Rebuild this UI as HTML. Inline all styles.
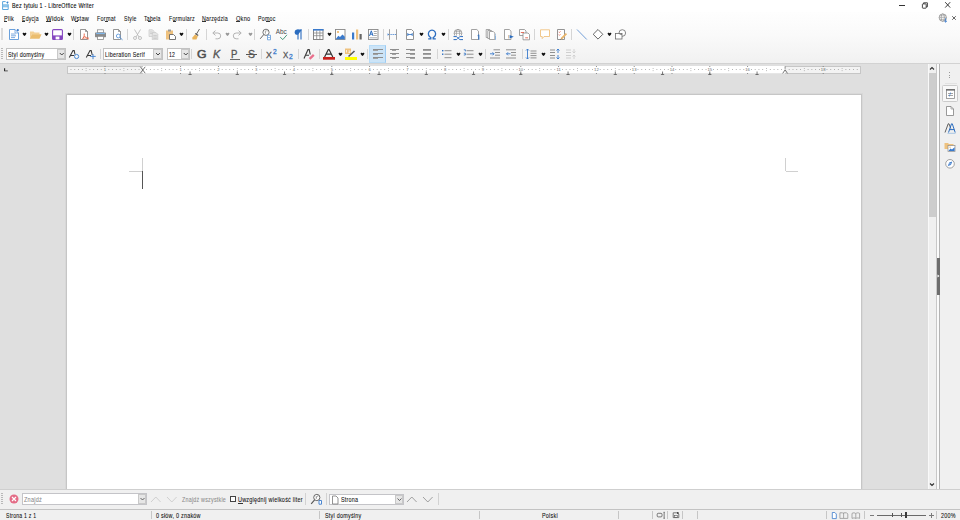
<!DOCTYPE html>
<html><head><meta charset="utf-8">
<style>
*{margin:0;padding:0;box-sizing:border-box}
html,body{width:960px;height:520px;overflow:hidden;background:#fff;font-family:"Liberation Sans",sans-serif;color:#000}
.a{position:absolute;display:block}
.t{position:absolute;white-space:nowrap;line-height:1;transform-origin:0 0;-webkit-text-stroke:0.08px currentColor;letter-spacing:0.3px}
</style></head><body>
<div class="a" style="left:0px;top:0px;width:960px;height:12px;background:#fff"></div>
<div class="a" style="left:0px;top:12px;width:960px;height:51px;background:linear-gradient(#fefefe,#fafafa 45%,#f1f1f1)"></div>
<div class="a" style="left:0px;top:63px;width:960px;height:1px;background:#d2d2d2"></div>
<div class="a" style="left:0px;top:64px;width:928px;height:425px;background:#dfdfdf"></div>
<div class="a" style="left:65px;top:93px;width:798px;height:396px;background:#d8d8d8"></div>
<div class="a" style="left:66px;top:94px;width:796px;height:395px;background:#c6c6c6"></div>
<div class="a" style="left:67px;top:95px;width:794px;height:394px;background:#fff"></div>
<div class="a" style="left:928px;top:64px;width:8px;height:425px;background:#f0f0f0;border-left:1px solid #f9f9f9"></div>
<div class="a" style="left:929px;top:73px;width:7px;height:144px;background:#cdcdcd"></div>
<svg class="a" style="left:928px;top:64px;" width="8" height="9" viewBox="0 0 8 9"><path d="M2 5.5 L4 3.5 L6 5.5" stroke="#333" stroke-width="1.1" fill="none"/></svg>
<svg class="a" style="left:928px;top:480px;" width="8" height="9" viewBox="0 0 8 9"><path d="M2 3.5 L4 5.5 L6 3.5" stroke="#333" stroke-width="1.1" fill="none"/></svg>
<div class="a" style="left:936px;top:64px;width:1px;height:425px;background:#c8c8c8"></div>
<div class="a" style="left:937px;top:64px;width:2px;height:425px;background:#fbfbfb"></div>
<div class="a" style="left:939px;top:64px;width:1px;height:425px;background:#b4b4b4"></div>
<div class="a" style="left:937px;top:258px;width:3px;height:37px;background:#6d6d6d"></div>
<svg class="a" style="left:937px;top:273px;" width="3" height="6" viewBox="0 0 3 6"><path d="M0.5 1.5 L2.5 3 L0.5 4.5 Z" fill="#fff"/></svg>
<div class="a" style="left:940px;top:64px;width:20px;height:425px;background:#f0f0f0"></div>
<div class="a" style="left:0px;top:489px;width:960px;height:1px;background:#cfcfcf"></div>
<div class="a" style="left:0px;top:490px;width:960px;height:19px;background:#f0f0f0"></div>
<div class="a" style="left:0px;top:509px;width:960px;height:1px;background:#c3c3c3"></div>
<div class="a" style="left:0px;top:510px;width:960px;height:10px;background:#f0f0f0"></div>
<svg class="a" style="left:1px;top:0px;" width="9" height="11" viewBox="0 0 9 11"><path d="M1.6 1.6H4.6M1.6 1.6V9.5H7.2V4.3" fill="none" stroke="#5aa6dd" stroke-width="1"/><rect x="1.6" y="4.3" width="5.6" height="3" fill="#7dbbe6"/><rect x="2.4" y="4.8" width="3.8" height="2" fill="#93c6ea"/><circle cx="6.7" cy="2.2" r="0.8" fill="#1f6fc8"/><circle cx="5.5" cy="2.3" r="0.5" fill="#5aa6dd"/><circle cx="6.4" cy="3.4" r="0.5" fill="#5aa6dd"/></svg>
<div class="t" style="left:12px;top:2px;font-size:7px;color:#000;transform:scaleX(0.767);">Bez tytułu 1 - LibreOffice Writer</div>
<div class="a" style="left:899px;top:5px;width:6px;height:1px;background:#333"></div>
<svg class="a" style="left:921px;top:1px;" width="8" height="8" viewBox="0 0 8 8"><rect x="1.4" y="2.9" width="3.8" height="4.3" rx="0.5" fill="none" stroke="#333" stroke-width="0.9"/><path d="M2.6 2.9V1.8H6.4V5.8H5.2" fill="none" stroke="#333" stroke-width="0.9"/></svg>
<svg class="a" style="left:944px;top:1px;" width="8" height="8" viewBox="0 0 8 8"><path d="M1.2 1.2L6.2 6.6M6.2 1.2L1.2 6.6" stroke="#333" stroke-width="0.95"/></svg>
<div class="t" style="left:4px;top:14.6px;font-size:7px;color:#111;transform:scaleX(0.796);">Plik</div>
<div class="t" style="left:21.6px;top:14.6px;font-size:7px;color:#111;transform:scaleX(0.737);">Edycja</div>
<div class="t" style="left:46.4px;top:14.6px;font-size:7px;color:#111;transform:scaleX(0.857);">Widok</div>
<div class="t" style="left:71.4px;top:14.6px;font-size:7px;color:#111;transform:scaleX(0.802);">Wstaw</div>
<div class="t" style="left:97px;top:14.6px;font-size:7px;color:#111;transform:scaleX(0.781);">Format</div>
<div class="t" style="left:123.6px;top:14.6px;font-size:7px;color:#111;transform:scaleX(0.74);">Style</div>
<div class="t" style="left:143.9px;top:14.6px;font-size:7px;color:#111;transform:scaleX(0.745);">Tabela</div>
<div class="t" style="left:168.7px;top:14.6px;font-size:7px;color:#111;transform:scaleX(0.755);">Formularz</div>
<div class="t" style="left:202.3px;top:14.6px;font-size:7px;color:#111;transform:scaleX(0.758);">Narzędzia</div>
<div class="t" style="left:235.9px;top:14.6px;font-size:7px;color:#111;transform:scaleX(0.805);">Okno</div>
<div class="t" style="left:258.4px;top:14.6px;font-size:7px;color:#111;transform:scaleX(0.757);">Pomoc</div>
<div class="a" style="left:4px;top:21.2px;width:3px;height:0.9px;background:#333"></div>
<div class="a" style="left:21.6px;top:21.2px;width:3px;height:0.9px;background:#333"></div>
<div class="a" style="left:46.4px;top:21.2px;width:5px;height:0.9px;background:#333"></div>
<div class="a" style="left:75px;top:21.2px;width:3px;height:0.9px;background:#333"></div>
<div class="a" style="left:105px;top:21.2px;width:2.5px;height:0.9px;background:#333"></div>
<div class="a" style="left:148px;top:21.2px;width:3px;height:0.9px;background:#333"></div>
<div class="a" style="left:173px;top:21.2px;width:2.5px;height:0.9px;background:#333"></div>
<div class="a" style="left:202.3px;top:21.2px;width:4px;height:0.9px;background:#333"></div>
<div class="a" style="left:235.9px;top:21.2px;width:4px;height:0.9px;background:#333"></div>
<div class="a" style="left:266px;top:21.2px;width:4px;height:0.9px;background:#333"></div>
<svg class="a" style="left:938px;top:13px;" width="11" height="10" viewBox="0 0 11 10"><circle cx="4.8" cy="4.6" r="3.7" fill="#fff" stroke="#8a8a8a" stroke-width="0.75"/><ellipse cx="4.8" cy="4.6" rx="1.6" ry="3.7" fill="none" stroke="#8a8a8a" stroke-width="0.6"/><path d="M1.1 4.6h7.4M1.6 2.8h6.4M1.6 6.4h6.4" stroke="#8a8a8a" stroke-width="0.55"/><path d="M7.6 5.2v3.8M6.2 7.8l1.4 1.4 1.4-1.4" stroke="#3a7acc" stroke-width="0.85" fill="none"/></svg>
<svg class="a" style="left:951px;top:15px;" width="6" height="6" viewBox="0 0 6 6"><path d="M1.2 1.2l3.6 3.6M4.8 1.2l-3.6 3.6" stroke="#555" stroke-width="0.9"/></svg>
<div class="a" style="left:1px;top:28px;width:2px;height:12px;background:#dcdcdc"></div>
<svg class="a" style="left:8px;top:28px;" width="12" height="13" viewBox="0 0 12 13"><path d="M1.5 1.5H7L10.5 5V11.5H1.5Z" fill="#fff" stroke="#5a96d8" stroke-width="0.9"/><path d="M7 1.5V5H10.5" fill="none" stroke="#5a96d8" stroke-width="0.7"/><path d="M3 6h4.5M3 7.8h5M3 9.6h4" stroke="#5a96d8" stroke-width="0.8"/><circle cx="9.8" cy="2.2" r="1.1" fill="#3a7acc"/></svg>
<svg class="a" style="left:22px;top:32px;" width="5" height="5" viewBox="0 0 5 5"><path d="M0.6 1.5C0.6 0.6 1.6 0.5 2.5 1.2C3.4 0.5 4.4 0.6 4.4 1.5C4.4 2.3 3.4 3.2 2.5 4.1C1.6 3.2 0.6 2.3 0.6 1.5Z" fill="#111"/></svg>
<svg class="a" style="left:29px;top:29px;" width="13" height="11" viewBox="0 0 13 11"><path d="M1 2.5H4.5L5.5 3.5H10.5V5.5H2.5L1 9.5Z" fill="#f3d095"/><path d="M0.8 9.8L2.8 5.3H12.5L10.5 9.8Z" fill="#ebbd6e"/></svg>
<svg class="a" style="left:44px;top:32px;" width="5" height="5" viewBox="0 0 5 5"><path d="M0.6 1.5C0.6 0.6 1.6 0.5 2.5 1.2C3.4 0.5 4.4 0.6 4.4 1.5C4.4 2.3 3.4 3.2 2.5 4.1C1.6 3.2 0.6 2.3 0.6 1.5Z" fill="#111"/></svg>
<svg class="a" style="left:51px;top:28px;" width="13" height="13" viewBox="0 0 13 13"><rect x="1.6" y="1.6" width="9.8" height="9.8" rx="1" fill="#fff" stroke="#8547c0" stroke-width="1.1"/><rect x="1.6" y="7.4" width="9.8" height="4" fill="#8547c0"/><rect x="4.6" y="8.6" width="3.8" height="2.8" fill="#fff"/></svg>
<svg class="a" style="left:66.5px;top:32px;" width="5" height="5" viewBox="0 0 5 5"><path d="M0.6 1.5C0.6 0.6 1.6 0.5 2.5 1.2C3.4 0.5 4.4 0.6 4.4 1.5C4.4 2.3 3.4 3.2 2.5 4.1C1.6 3.2 0.6 2.3 0.6 1.5Z" fill="#111"/></svg>
<div class="a" style="left:73px;top:29px;width:1px;height:11px;background:#d5d5d5"></div>
<svg class="a" style="left:79px;top:28px;" width="11" height="13" viewBox="0 0 11 13"><path d="M1.5 1.5H6.5L8.5 3.5V11.5H1.5Z" fill="#fff" stroke="#7a7a7a" stroke-width="0.8"/><path d="M6.5 1.5V3.5H8.5" fill="none" stroke="#7a7a7a" stroke-width="0.7"/><path d="M5.2 5.5C5.6 8 4.5 10 3.2 11.3M5.4 8C6.5 9.6 8 10.6 9.8 11" stroke="#e8603f" stroke-width="0.9" fill="none"/><path d="M3.5 10.2L9.8 9.8" stroke="#e8603f" stroke-width="0.6"/></svg>
<svg class="a" style="left:94px;top:28px;" width="13" height="13" viewBox="0 0 13 13"><rect x="3.5" y="1.8" width="6" height="3" fill="#fff" stroke="#8a8a8a" stroke-width="0.8"/><rect x="1" y="4.6" width="11" height="4.6" rx="0.6" fill="#8a8a8a"/><rect x="2.2" y="4.8" width="8.6" height="1.3" fill="#7fb6ea"/><rect x="3.5" y="8.3" width="6" height="3.2" fill="#fff" stroke="#8a8a8a" stroke-width="0.8"/></svg>
<svg class="a" style="left:112px;top:28px;" width="12" height="13" viewBox="0 0 12 13"><path d="M1.5 1.5H6.5L8.5 3.5V11.5H1.5Z" fill="#fff" stroke="#7a7a7a" stroke-width="0.8"/><path d="M6.5 1.5V3.5H8.5" fill="none" stroke="#7a7a7a" stroke-width="0.7"/><circle cx="6.3" cy="8" r="1.9" fill="#fff" stroke="#4a8ad4" stroke-width="0.8"/><path d="M7.7 9.4L10.5 11.8" stroke="#4a8ad4" stroke-width="0.9"/></svg>
<div class="a" style="left:127px;top:29px;width:1px;height:11px;background:#d5d5d5"></div>
<svg class="a" style="left:132px;top:29px;" width="11" height="11" viewBox="0 0 11 11"><path d="M2.5 0.5L7 8M8.5 0.5L4 8" stroke="#b4b4b4" stroke-width="0.8" fill="none"/><circle cx="3" cy="9" r="1.5" fill="none" stroke="#b4b4b4" stroke-width="0.8"/><circle cx="8" cy="9" r="1.5" fill="none" stroke="#b4b4b4" stroke-width="0.8"/></svg>
<svg class="a" style="left:148px;top:29px;" width="11" height="11" viewBox="0 0 11 11"><path d="M1 0.8H4.5L6 2.3V7.5H1Z" fill="#e8e8e8" stroke="#c8c8c8" stroke-width="0.7"/><path d="M4.3 3.5H8L9.8 5.3V10.8H4.3Z" fill="#e4e4e4" stroke="#c8c8c8" stroke-width="0.7"/><path d="M2 3h2.5M2 4.5h2.5M5.3 6.5h3.5M5.3 8h3.5M5.3 9.5h3.5" stroke="#c0c0c0" stroke-width="0.6"/></svg>
<svg class="a" style="left:165px;top:28px;" width="12" height="13" viewBox="0 0 12 13"><rect x="1" y="2.5" width="7" height="9" fill="#eec17e"/><rect x="3" y="1.5" width="3" height="2" fill="#999"/><path d="M4.5 6.5H8.5L10.5 8.5V11.5H4.5Z" fill="#fff" stroke="#666" stroke-width="0.9"/></svg>
<svg class="a" style="left:178.5px;top:32px;" width="5" height="5" viewBox="0 0 5 5"><path d="M0.6 1.5C0.6 0.6 1.6 0.5 2.5 1.2C3.4 0.5 4.4 0.6 4.4 1.5C4.4 2.3 3.4 3.2 2.5 4.1C1.6 3.2 0.6 2.3 0.6 1.5Z" fill="#111"/></svg>
<div class="a" style="left:186px;top:29px;width:1px;height:11px;background:#d5d5d5"></div>
<svg class="a" style="left:191px;top:28px;" width="10" height="13" viewBox="0 0 10 13"><path d="M8.5 1L5.5 6" stroke="#555" stroke-width="0.9"/><path d="M4.2 5.5L7.2 7.6" stroke="#555" stroke-width="1.2"/><path d="M4 6.5L6.8 8.3L5.5 11.5H1.5L1.2 9.8Z" fill="#e8b35c"/></svg>
<div class="a" style="left:206px;top:29px;width:1px;height:11px;background:#d5d5d5"></div>
<svg class="a" style="left:211px;top:29px;" width="11" height="11" viewBox="0 0 11 11"><path d="M2.5 4H6.8A2.9 2.9 0 0 1 6.8 9.8H4.5" stroke="#a8a8a8" stroke-width="0.85" fill="none"/><path d="M4.5 1.6L1.8 4L4.5 6.4" stroke="#a8a8a8" stroke-width="0.85" fill="none"/></svg>
<svg class="a" style="left:225px;top:32px;" width="5" height="5" viewBox="0 0 5 5"><path d="M0.6 1.5C0.6 0.6 1.6 0.5 2.5 1.2C3.4 0.5 4.4 0.6 4.4 1.5C4.4 2.3 3.4 3.2 2.5 4.1C1.6 3.2 0.6 2.3 0.6 1.5Z" fill="#9a9a9a"/></svg>
<svg class="a" style="left:232px;top:29px;" width="11" height="11" viewBox="0 0 11 11"><path d="M8.5 4H4.2A2.9 2.9 0 0 0 4.2 9.8H6.5" stroke="#a8a8a8" stroke-width="0.85" fill="none"/><path d="M6.5 1.6L9.2 4L6.5 6.4" stroke="#a8a8a8" stroke-width="0.85" fill="none"/></svg>
<svg class="a" style="left:247.5px;top:32px;" width="5" height="5" viewBox="0 0 5 5"><path d="M0.6 1.5C0.6 0.6 1.6 0.5 2.5 1.2C3.4 0.5 4.4 0.6 4.4 1.5C4.4 2.3 3.4 3.2 2.5 4.1C1.6 3.2 0.6 2.3 0.6 1.5Z" fill="#9a9a9a"/></svg>
<div class="a" style="left:254px;top:29px;width:1px;height:11px;background:#d5d5d5"></div>
<svg class="a" style="left:259px;top:28px;" width="13" height="13" viewBox="0 0 13 13"><circle cx="7" cy="4.3" r="3.1" fill="#fff" stroke="#555" stroke-width="0.8"/><path d="M4.8 6.5L1.2 10.8" stroke="#555" stroke-width="0.9"/><path d="M6.4 2.6v3M7.4 2.8h1.2" stroke="#666" stroke-width="0.6"/><path d="M8.5 7.2H11.5V11.8H8.5Z" fill="#fff" stroke="#5a96d8" stroke-width="0.8"/><path d="M9.2 9.5h1.6" stroke="#5a96d8" stroke-width="0.8"/></svg>
<svg class="a" style="left:275px;top:28px;" width="13" height="13" viewBox="0 0 13 13"><text x="0.8" y="6.3" font-family="Liberation Sans" font-size="6.4" fill="#4a4a4a" textLength="11" lengthAdjust="spacingAndGlyphs">Abc</text><path d="M5.2 9.2L7.8 11.6L12 6.8" stroke="#3a9070" stroke-width="0.9" fill="none"/></svg>
<svg class="a" style="left:293px;top:28px;" width="10" height="13" viewBox="0 0 10 13"><path d="M5 1.6V11.6M8 1.6V11.6" stroke="#2a6cbf" stroke-width="1.1"/><path d="M9 1.6H4.3A2.6 2.6 0 0 0 4.3 6.8H5Z" fill="#2a6cbf"/></svg>
<div class="a" style="left:308px;top:29px;width:1px;height:11px;background:#d5d5d5"></div>
<svg class="a" style="left:312px;top:28px;" width="12" height="13" viewBox="0 0 12 13"><rect x="1.5" y="1.5" width="9.5" height="10" fill="#fff" stroke="#777" stroke-width="0.9"/><rect x="1" y="1" width="10.5" height="1.6" fill="#3a7acc"/><path d="M1.5 5h9.5M1.5 7.7h9.5M4.7 2.5v9M7.9 2.5v9" stroke="#888" stroke-width="0.8"/></svg>
<svg class="a" style="left:327px;top:32px;" width="5" height="5" viewBox="0 0 5 5"><path d="M0.6 1.5C0.6 0.6 1.6 0.5 2.5 1.2C3.4 0.5 4.4 0.6 4.4 1.5C4.4 2.3 3.4 3.2 2.5 4.1C1.6 3.2 0.6 2.3 0.6 1.5Z" fill="#111"/></svg>
<svg class="a" style="left:334px;top:28px;" width="12" height="13" viewBox="0 0 12 13"><rect x="1.5" y="1.5" width="9.5" height="10" fill="#fff" stroke="#888" stroke-width="0.9"/><circle cx="4" cy="4" r="0.9" fill="#eea845"/><path d="M1.8 11L4.3 7.8L6 9L8.5 6.5L10.8 8.8V11.2H1.8Z" fill="#3a7acc"/></svg>
<svg class="a" style="left:351px;top:28px;" width="12" height="13" viewBox="0 0 12 13"><rect x="1" y="4.5" width="2.2" height="7" fill="#3a7acc"/><rect x="5" y="1.5" width="2.2" height="10" fill="#eec17e"/><rect x="8.5" y="6" width="2.2" height="5.5" fill="#666"/></svg>
<svg class="a" style="left:367px;top:28px;" width="12" height="13" viewBox="0 0 12 13"><rect x="1.5" y="1.5" width="9.5" height="10" fill="#fff" stroke="#888" stroke-width="0.9"/><path d="M2.5 8L4.3 2.8L6.1 8M3.2 6.2h2.2" stroke="#2a6cbf" stroke-width="1" fill="none"/><path d="M6.8 3.5h3M6.8 5.5h3M6.8 7.5h3M2.5 9.8h7.5" stroke="#888" stroke-width="0.7"/></svg>
<div class="a" style="left:383px;top:29px;width:1px;height:11px;background:#d5d5d5"></div>
<svg class="a" style="left:387px;top:28px;" width="12" height="13" viewBox="0 0 12 13"><path d="M2.5 1.2V11.8M9.5 1.2V11.8" stroke="#8a8a8a" stroke-width="0.8"/><path d="M3.5 6.5H9" stroke="#3a7acc" stroke-width="0.9" stroke-dasharray="1.2 0.9"/><path d="M0.6 5.2L2.2 6.5L0.6 7.8Z" fill="#3a7acc"/></svg>
<svg class="a" style="left:405px;top:28px;" width="10" height="13" viewBox="0 0 10 13"><path d="M1.5 1.5H6.5L8.5 3.5V11.5H1.5Z" fill="#fff" stroke="#888" stroke-width="0.9"/><path d="M2.8 5v3M7.2 5v3M2.8 6.5h4.4" stroke="#2a6cbf" stroke-width="0.8"/></svg>
<svg class="a" style="left:418.5px;top:32px;" width="5" height="5" viewBox="0 0 5 5"><path d="M0.6 1.5C0.6 0.6 1.6 0.5 2.5 1.2C3.4 0.5 4.4 0.6 4.4 1.5C4.4 2.3 3.4 3.2 2.5 4.1C1.6 3.2 0.6 2.3 0.6 1.5Z" fill="#111"/></svg>
<svg class="a" style="left:426px;top:28px;" width="12" height="13" viewBox="0 0 12 13"><path d="M2.2 10.8H4.8V9.5A3.6 3.8 0 1 1 7.2 9.5V10.8H9.8" stroke="#2a6cbf" stroke-width="1.3" fill="none"/></svg>
<svg class="a" style="left:441px;top:32px;" width="5" height="5" viewBox="0 0 5 5"><path d="M0.6 1.5C0.6 0.6 1.6 0.5 2.5 1.2C3.4 0.5 4.4 0.6 4.4 1.5C4.4 2.3 3.4 3.2 2.5 4.1C1.6 3.2 0.6 2.3 0.6 1.5Z" fill="#111"/></svg>
<div class="a" style="left:448px;top:29px;width:1px;height:11px;background:#d5d5d5"></div>
<svg class="a" style="left:452px;top:28px;" width="13" height="13" viewBox="0 0 13 13"><circle cx="6" cy="5.3" r="3.9" fill="#fff" stroke="#8a8a8a" stroke-width="0.75"/><ellipse cx="6" cy="5.3" rx="1.7" ry="3.9" fill="none" stroke="#8a8a8a" stroke-width="0.6"/><path d="M2.1 5.3h7.8M2.6 3.3h6.8" stroke="#8a8a8a" stroke-width="0.6"/><rect x="1" y="7.6" width="10.5" height="4.6" fill="#fbfbfb"/><path d="M1.5 8.6H4.3C5.4 8.6 5.6 10.1 6.2 10.1C6.8 10.1 7 8.6 8.1 8.6H11M1.5 11.6H4.3C5.4 11.6 5.6 10.1 6.2 10.1C6.8 10.1 7 11.6 8.1 11.6H11" stroke="#2a6cbf" stroke-width="1" fill="none"/></svg>
<svg class="a" style="left:470px;top:28px;" width="12" height="13" viewBox="0 0 12 13"><path d="M1.5 1.5H6.8L8.5 3.2V11.5H1.5Z" fill="#fff" stroke="#8a8a8a" stroke-width="0.8"/><path d="M8.8 6.8V11.8" stroke="#2a6cbf" stroke-width="1.1"/><path d="M7.6 7.6L8.8 6.8" stroke="#2a6cbf" stroke-width="0.8"/></svg>
<svg class="a" style="left:485px;top:28px;" width="12" height="13" viewBox="0 0 12 13"><path d="M1.2 1.5H4.8L5.8 2.5V9.5H1.2Z" fill="#fff" stroke="#8a8a8a" stroke-width="0.75"/><path d="M2.8 2.5H6.4L7.4 3.5V10.5H2.8Z" fill="#fff" stroke="#8a8a8a" stroke-width="0.75"/><path d="M4.5 3.5H8.3L9.8 5V11.5H4.5Z" fill="#fff" stroke="#8a8a8a" stroke-width="0.75"/><path d="M10.5 7.5V11.8" stroke="#8ab4e0" stroke-width="1"/><circle cx="10.5" cy="6.3" r="0.5" fill="#8ab4e0"/></svg>
<svg class="a" style="left:503px;top:28px;" width="12" height="13" viewBox="0 0 12 13"><path d="M1.5 1.5H6.3L8 3.2V11.5H1.5Z" fill="#fff" stroke="#8a8a8a" stroke-width="0.8"/><path d="M6.6 7V10.6L10.8 8.8Z" fill="#2a6cbf"/><path d="M5.5 7V10.5" stroke="#c8a070" stroke-width="0.6"/></svg>
<svg class="a" style="left:518px;top:28px;" width="13" height="13" viewBox="0 0 13 13"><path d="M1.5 1.5H6.5L8 3V7.5H1.5Z" fill="#fff" stroke="#8a8a8a" stroke-width="0.8"/><path d="M5 5H10L11.5 6.5V11.8H5Z" fill="#fff" stroke="#8a8a8a" stroke-width="0.8"/><path d="M2.8 4.5h3.2M7.2 9.8h2.8" stroke="#e0503a" stroke-width="0.8"/></svg>
<div class="a" style="left:534px;top:29px;width:1px;height:11px;background:#d5d5d5"></div>
<svg class="a" style="left:539px;top:28px;" width="12" height="13" viewBox="0 0 12 13"><path d="M1.5 1.8H10.5V8.5H5L3.2 10.6V8.5H1.5Z" fill="#fff" stroke="#efbe78" stroke-width="0.85"/></svg>
<svg class="a" style="left:556px;top:28px;" width="12" height="13" viewBox="0 0 12 13"><path d="M1.5 1.5H8.5V11.5H1.5Z" fill="#fff" stroke="#888" stroke-width="0.9"/><path d="M2.6 3.8l0.8 0.8l1.2-1.4M2.6 6.6l0.8 0.8l1.2-1.4" stroke="#e0503a" stroke-width="0.6" fill="none"/><path d="M5.2 10.8L10.4 5.6" stroke="#eab56a" stroke-width="1.9"/><path d="M4.6 11.4L5.2 10.8" stroke="#555" stroke-width="0.8"/></svg>
<div class="a" style="left:571px;top:29px;width:1px;height:11px;background:#d5d5d5"></div>
<svg class="a" style="left:576px;top:28px;" width="12" height="13" viewBox="0 0 12 13"><path d="M1 1.5L10.8 11.5" stroke="#6a9ad6" stroke-width="0.95"/></svg>
<svg class="a" style="left:592px;top:28px;" width="12" height="13" viewBox="0 0 12 13"><path d="M6 1.5L10.8 6.3L6 11.1L1.2 6.3Z" fill="#fff" stroke="#555" stroke-width="0.9"/></svg>
<svg class="a" style="left:607px;top:32px;" width="5" height="5" viewBox="0 0 5 5"><path d="M0.6 1.5C0.6 0.6 1.6 0.5 2.5 1.2C3.4 0.5 4.4 0.6 4.4 1.5C4.4 2.3 3.4 3.2 2.5 4.1C1.6 3.2 0.6 2.3 0.6 1.5Z" fill="#111"/></svg>
<svg class="a" style="left:614px;top:28px;" width="13" height="13" viewBox="0 0 13 13"><circle cx="8.3" cy="5" r="3.3" fill="#fff" stroke="#6a6a6a" stroke-width="0.8"/><rect x="1.5" y="5.5" width="6.5" height="5.5" fill="#fff" stroke="#6a6a6a" stroke-width="0.8"/><path d="M8 6.6A3.3 3.3 0 0 1 5.1 5.5" fill="none" stroke="#6a6a6a" stroke-width="0.8"/></svg>
<div class="a" style="left:1px;top:48px;width:2px;height:1px;background:#b8b8b8"></div>
<div class="a" style="left:1px;top:50px;width:2px;height:1px;background:#b8b8b8"></div>
<div class="a" style="left:1px;top:52px;width:2px;height:1px;background:#b8b8b8"></div>
<div class="a" style="left:1px;top:54px;width:2px;height:1px;background:#b8b8b8"></div>
<div class="a" style="left:1px;top:56px;width:2px;height:1px;background:#b8b8b8"></div>
<div class="a" style="left:1px;top:58px;width:2px;height:1px;background:#b8b8b8"></div>
<div class="a" style="left:6px;top:48px;width:60px;height:12px;background:#fff;border:1px solid #c2c2c2"></div>
<div class="a" style="left:56.5px;top:49px;width:8.5px;height:10px;background:#e6e6e6;border:1px solid #c9c9c9"></div>
<svg class="a" style="left:56.5px;top:50px;" width="9.5" height="8" viewBox="0 0 9.5 8"><path d="M2.75 3.0L4.75 5.0L6.75 3.0" stroke="#333" stroke-width="0.9" fill="none"/></svg>
<div class="t" style="left:8px;top:51px;font-size:7px;color:#111;transform:scaleX(0.774);">Styl domyślny</div>
<svg class="a" style="left:68px;top:48px;" width="13" height="12" viewBox="0 0 13 12"><path d="M1.3 9.6L5 2.6H6.2L7 6.5M2.8 7.4H6" stroke="#3a3a3a" stroke-width="1.05" fill="none"/><circle cx="8.6" cy="8.5" r="2.1" fill="none" stroke="#4a8ad4" stroke-width="1"/></svg>
<svg class="a" style="left:85px;top:48px;" width="12" height="12" viewBox="0 0 12 12"><path d="M1.3 9.6L5 2.6H6.2L7.2 7M2.8 7.4H6" stroke="#3a3a3a" stroke-width="1.05" fill="none"/><path d="M5.2 8.4h5.5M8 6v5.2" stroke="#3a7acc" stroke-width="0.9"/></svg>
<div class="a" style="left:100px;top:49px;width:1px;height:10px;background:#d5d5d5"></div>
<div class="a" style="left:103px;top:48px;width:60px;height:12px;background:#fff;border:1px solid #c2c2c2"></div>
<div class="a" style="left:153px;top:49px;width:9px;height:10px;background:#e6e6e6;border:1px solid #c9c9c9"></div>
<svg class="a" style="left:153px;top:50px;" width="10" height="8" viewBox="0 0 10 8"><path d="M3.0 3.0L5.0 5.0L7.0 3.0" stroke="#333" stroke-width="0.9" fill="none"/></svg>
<div class="t" style="left:104.7px;top:51px;font-size:7px;color:#111;transform:scaleX(0.771);">Liberation Serif</div>
<div class="a" style="left:167px;top:48px;width:23px;height:12px;background:#fff;border:1px solid #c2c2c2"></div>
<div class="a" style="left:180.5px;top:49px;width:8.5px;height:10px;background:#e6e6e6;border:1px solid #c9c9c9"></div>
<svg class="a" style="left:180.5px;top:50px;" width="9.5" height="8" viewBox="0 0 9.5 8"><path d="M2.75 3.0L4.75 5.0L6.75 3.0" stroke="#333" stroke-width="0.9" fill="none"/></svg>
<div class="t" style="left:169.2px;top:51px;font-size:7px;color:#111;transform:scaleX(0.742);">12</div>
<div class="a" style="left:191px;top:49px;width:1px;height:10px;background:#d5d5d5"></div>
<div class="t" style="left:196.6px;top:48.7499px;font-size:11.4px;color:#4e4e4e;transform:scaleX(1.08);letter-spacing:0;-webkit-text-stroke:0;-webkit-text-stroke:0.5px #4e4e4e">G</div>
<div class="t" style="left:213.2px;top:48.7499px;font-size:11.4px;color:#565656;transform:scaleX(0.95);letter-spacing:0;-webkit-text-stroke:0;font-style:italic;-webkit-text-stroke:0.35px #565656">K</div>
<div class="t" style="left:230.8px;top:48.7499px;font-size:11.4px;color:#565656;transform:scaleX(0.84);letter-spacing:0;-webkit-text-stroke:0;-webkit-text-stroke:0.35px #565656">P</div>
<div class="a" style="left:230px;top:59.2px;width:10px;height:0.9px;background:#6a6a6a"></div>
<div class="t" style="left:247.8px;top:48.7499px;font-size:11.4px;color:#565656;transform:scaleX(0.92);letter-spacing:0;-webkit-text-stroke:0;-webkit-text-stroke:0.35px #565656">S</div>
<div class="a" style="left:245.5px;top:53.6px;width:11.5px;height:0.9px;background:#565656"></div>
<div class="a" style="left:261px;top:49px;width:1px;height:10px;background:#d5d5d5"></div>
<div class="t" style="left:266.4px;top:50.17359999999999px;font-size:9.6px;color:#565656;transform:scaleX(0.92);letter-spacing:0;-webkit-text-stroke:0;-webkit-text-stroke:0.3px #565656">X</div>
<div class="t" style="left:272.6px;top:47.9745px;font-size:7px;color:#3a7acc;transform:scaleX(0.95);letter-spacing:0;-webkit-text-stroke:0;-webkit-text-stroke:0.3px #3a7acc">2</div>
<div class="t" style="left:283.4px;top:50.17359999999999px;font-size:9.6px;color:#565656;transform:scaleX(0.82);letter-spacing:0;-webkit-text-stroke:0;-webkit-text-stroke:0.3px #565656">X</div>
<div class="t" style="left:289px;top:53.4745px;font-size:7px;color:#3a7acc;transform:scaleX(0.95);letter-spacing:0;-webkit-text-stroke:0;-webkit-text-stroke:0.3px #3a7acc">2</div>
<div class="a" style="left:298px;top:49px;width:1px;height:10px;background:#d5d5d5"></div>
<svg class="a" style="left:302px;top:48px;" width="14" height="12" viewBox="0 0 14 12"><path d="M2 10.6L6 1.6H7.2L8.2 6.5M3.6 7.2H7" stroke="#3c3c3c" stroke-width="1.15" fill="none"/><path d="M7.6 10.8L11.8 6.8" stroke="#ea6f8c" stroke-width="2.3"/></svg>
<div class="a" style="left:319px;top:49px;width:1px;height:10px;background:#d5d5d5"></div>
<svg class="a" style="left:322px;top:48px;" width="14" height="13" viewBox="0 0 14 13"><path d="M2.6 8.9L6.3 1.5H7.1L10.8 8.9M4.1 6.1H9.3" stroke="#333" stroke-width="1.2" fill="none"/><rect x="1" y="9" width="12" height="2.7" fill="#c9211e"/></svg>
<svg class="a" style="left:337.5px;top:51.8px;" width="5" height="5" viewBox="0 0 5 5"><path d="M0.6 1.5C0.6 0.6 1.6 0.5 2.5 1.2C3.4 0.5 4.4 0.6 4.4 1.5C4.4 2.3 3.4 3.2 2.5 4.1C1.6 3.2 0.6 2.3 0.6 1.5Z" fill="#111"/></svg>
<svg class="a" style="left:344px;top:48px;" width="14" height="13" viewBox="0 0 14 13"><rect x="1" y="0.5" width="6" height="5.5" fill="#eec17e"/><path d="M2.5 4.5v-2.5M4.5 3h1.5v1.5h-1.5" stroke="#fff" stroke-width="0.7" fill="none"/><path d="M4.5 8.5L10.5 3" stroke="#555" stroke-width="1.6"/><rect x="1" y="9" width="12" height="3" fill="#ffff00"/></svg>
<svg class="a" style="left:359.5px;top:51.8px;" width="5" height="5" viewBox="0 0 5 5"><path d="M0.6 1.5C0.6 0.6 1.6 0.5 2.5 1.2C3.4 0.5 4.4 0.6 4.4 1.5C4.4 2.3 3.4 3.2 2.5 4.1C1.6 3.2 0.6 2.3 0.6 1.5Z" fill="#111"/></svg>
<div class="a" style="left:367px;top:49px;width:1px;height:10px;background:#d5d5d5"></div>
<div class="a" style="left:369px;top:45px;width:17px;height:18px;background:#cce4f7;border:1px solid #b8dcf7;border-right-color:#9ccbf3"></div>
<div class="a" style="left:373px;top:49.1px;width:9.5px;height:1px;background:#8e8e8e"></div>
<div class="a" style="left:373px;top:50.0px;width:5.2250000000000005px;height:0.8px;background:#a2a2a2"></div>
<div class="a" style="left:389.5px;top:49.1px;width:9px;height:1px;background:#8e8e8e"></div>
<div class="a" style="left:391.525px;top:50.0px;width:4.95px;height:0.8px;background:#a2a2a2"></div>
<div class="a" style="left:406px;top:49.1px;width:9px;height:1px;background:#8e8e8e"></div>
<div class="a" style="left:410.05px;top:50.0px;width:4.95px;height:0.8px;background:#a2a2a2"></div>
<div class="a" style="left:422.5px;top:49.1px;width:8.5px;height:1px;background:#8e8e8e"></div>
<div class="a" style="left:422.5px;top:50.0px;width:8.5px;height:0.8px;background:#a2a2a2"></div>
<div class="a" style="left:373px;top:53.2px;width:9.5px;height:1px;background:#8e8e8e"></div>
<div class="a" style="left:373px;top:54.1px;width:5.2250000000000005px;height:0.8px;background:#a2a2a2"></div>
<div class="a" style="left:389.5px;top:53.2px;width:9px;height:1px;background:#8e8e8e"></div>
<div class="a" style="left:391.525px;top:54.1px;width:4.95px;height:0.8px;background:#a2a2a2"></div>
<div class="a" style="left:406px;top:53.2px;width:9px;height:1px;background:#8e8e8e"></div>
<div class="a" style="left:410.05px;top:54.1px;width:4.95px;height:0.8px;background:#a2a2a2"></div>
<div class="a" style="left:422.5px;top:53.2px;width:8.5px;height:1px;background:#8e8e8e"></div>
<div class="a" style="left:422.5px;top:54.1px;width:8.5px;height:0.8px;background:#a2a2a2"></div>
<div class="a" style="left:373px;top:57.2px;width:9.5px;height:1px;background:#8e8e8e"></div>
<div class="a" style="left:373px;top:58.1px;width:5.2250000000000005px;height:0.8px;background:#a2a2a2"></div>
<div class="a" style="left:389.5px;top:57.2px;width:9px;height:1px;background:#8e8e8e"></div>
<div class="a" style="left:391.525px;top:58.1px;width:4.95px;height:0.8px;background:#a2a2a2"></div>
<div class="a" style="left:406px;top:57.2px;width:9px;height:1px;background:#8e8e8e"></div>
<div class="a" style="left:410.05px;top:58.1px;width:4.95px;height:0.8px;background:#a2a2a2"></div>
<div class="a" style="left:422.5px;top:57.2px;width:8.5px;height:1px;background:#8e8e8e"></div>
<div class="a" style="left:422.5px;top:58.1px;width:8.5px;height:0.8px;background:#a2a2a2"></div>
<div class="a" style="left:437px;top:49px;width:1px;height:10px;background:#d5d5d5"></div>
<svg class="a" style="left:441px;top:48px;" width="12" height="12" viewBox="0 0 12 12"><rect x="1" y="2" width="1.4" height="1.4" fill="#2a6cbf"/><rect x="1" y="5.5" width="1.4" height="1.4" fill="#2a6cbf"/><path d="M3.5 2.7h7M3.5 6.2h7M3.5 9.7h7" stroke="#8a8a8a" stroke-width="0.95"/></svg>
<svg class="a" style="left:456px;top:51.8px;" width="5" height="5" viewBox="0 0 5 5"><path d="M0.6 1.5C0.6 0.6 1.6 0.5 2.5 1.2C3.4 0.5 4.4 0.6 4.4 1.5C4.4 2.3 3.4 3.2 2.5 4.1C1.6 3.2 0.6 2.3 0.6 1.5Z" fill="#111"/></svg>
<svg class="a" style="left:463px;top:48px;" width="12" height="12" viewBox="0 0 12 12"><path d="M0.8 1.8h1.6v1.6M0.8 5.2h1.6v1.8h-1.6" stroke="#2a6cbf" stroke-width="0.8" fill="none"/><path d="M3.5 2.7h7M3.5 6.2h7M3.5 9.7h7" stroke="#8a8a8a" stroke-width="0.95"/></svg>
<svg class="a" style="left:478px;top:51.8px;" width="5" height="5" viewBox="0 0 5 5"><path d="M0.6 1.5C0.6 0.6 1.6 0.5 2.5 1.2C3.4 0.5 4.4 0.6 4.4 1.5C4.4 2.3 3.4 3.2 2.5 4.1C1.6 3.2 0.6 2.3 0.6 1.5Z" fill="#111"/></svg>
<div class="a" style="left:485px;top:49px;width:1px;height:10px;background:#d5d5d5"></div>
<svg class="a" style="left:489px;top:48px;" width="12" height="12" viewBox="0 0 12 12"><path d="M4.5 1.8h6.5M6 4.5h5M6 7.2h5M1 10h10" stroke="#8a8a8a" stroke-width="0.95"/><path d="M1 5.8h4M3.5 4.3L5 5.8L3.5 7.3" stroke="#3a7acc" stroke-width="0.9" fill="none"/></svg>
<svg class="a" style="left:505px;top:48px;" width="12" height="12" viewBox="0 0 12 12"><path d="M1 1.8h10M6 4.5h5M6 7.2h5M1 10h10" stroke="#8a8a8a" stroke-width="0.95"/><path d="M1.5 5.8h4M3 4.3L1.5 5.8L3 7.3" stroke="#3a7acc" stroke-width="0.9" fill="none"/></svg>
<div class="a" style="left:522px;top:49px;width:1px;height:10px;background:#d5d5d5"></div>
<svg class="a" style="left:525px;top:48px;" width="13" height="12" viewBox="0 0 13 12"><path d="M2.5 1v10M1 2.5L2.5 1L4 2.5M1 9.5L2.5 11L4 9.5" stroke="#3a7acc" stroke-width="0.9" fill="none"/><path d="M5.5 3h6M5.5 5.3h6M5.5 7.6h6M5.5 9.9h6" stroke="#8a8a8a" stroke-width="0.95"/></svg>
<svg class="a" style="left:541px;top:51.8px;" width="5" height="5" viewBox="0 0 5 5"><path d="M0.6 1.5C0.6 0.6 1.6 0.5 2.5 1.2C3.4 0.5 4.4 0.6 4.4 1.5C4.4 2.3 3.4 3.2 2.5 4.1C1.6 3.2 0.6 2.3 0.6 1.5Z" fill="#111"/></svg>
<svg class="a" style="left:549px;top:48px;" width="12" height="12" viewBox="0 0 12 12"><path d="M1 2h5M1 4.5h5M1 7.5h5M1 10h5" stroke="#8a8a8a" stroke-width="0.95"/><path d="M9 1v4M7.5 2.5L9 1L10.5 2.5M9 7v4M7.5 9.5L9 11L10.5 9.5" stroke="#3a7acc" stroke-width="0.9" fill="none"/></svg>
<svg class="a" style="left:565px;top:48px;" width="12" height="12" viewBox="0 0 12 12"><path d="M1 2h5M1 4.5h5M1 7.5h5M1 10h5" stroke="#cfcfcf" stroke-width="1"/><path d="M9 1v4M7.5 3.5L9 5L10.5 3.5M9 7v4M7.5 8.5L9 7L10.5 8.5" stroke="#cfcfcf" stroke-width="0.9" fill="none"/></svg>
<div class="a" style="left:67px;top:66px;width:794px;height:8px;background:#f3f3f3;border:1px solid #c6c6c6"></div>
<div class="a" style="left:143px;top:66px;width:642px;height:8px;background:#fff;border-top:1px solid #fff;border-bottom:1px solid #e6e6e6"></div>
<svg class="a" style="left:67px;top:66px;" width="794" height="8" viewBox="0 0 794 8"><rect x="3.58" y="3" width="0.8" height="0.8" fill="#8a8a8a"/><rect x="7.36" y="3" width="0.8" height="0.8" fill="#8a8a8a"/><rect x="11.14" y="3" width="0.8" height="0.8" fill="#8a8a8a"/><rect x="14.92" y="3" width="0.8" height="0.8" fill="#8a8a8a"/><rect x="18.70" y="2" width="0.8" height="0.8" fill="#999"/><rect x="18.70" y="4.3" width="0.8" height="0.8" fill="#999"/><rect x="22.48" y="3" width="0.8" height="0.8" fill="#8a8a8a"/><rect x="26.26" y="3" width="0.8" height="0.8" fill="#8a8a8a"/><rect x="30.04" y="3" width="0.8" height="0.8" fill="#8a8a8a"/><rect x="33.82" y="3" width="0.8" height="0.8" fill="#8a8a8a"/><text x="38.00" y="5.3" font-family="Liberation Sans" font-size="4.2" text-anchor="middle" fill="#6a6a6a">1</text><rect x="37.55" y="0.1" width="0.9" height="0.9" fill="#777"/><rect x="37.55" y="7.1" width="0.9" height="0.9" fill="#777"/><rect x="41.38" y="3" width="0.8" height="0.8" fill="#8a8a8a"/><rect x="45.16" y="3" width="0.8" height="0.8" fill="#8a8a8a"/><rect x="48.94" y="3" width="0.8" height="0.8" fill="#8a8a8a"/><rect x="52.72" y="3" width="0.8" height="0.8" fill="#8a8a8a"/><rect x="56.50" y="2" width="0.8" height="0.8" fill="#999"/><rect x="56.50" y="4.3" width="0.8" height="0.8" fill="#999"/><rect x="60.28" y="3" width="0.8" height="0.8" fill="#8a8a8a"/><rect x="64.06" y="3" width="0.8" height="0.8" fill="#8a8a8a"/><rect x="67.84" y="3" width="0.8" height="0.8" fill="#8a8a8a"/><rect x="71.62" y="3" width="0.8" height="0.8" fill="#8a8a8a"/><rect x="79.18" y="3" width="0.8" height="0.8" fill="#8a8a8a"/><rect x="82.96" y="3" width="0.8" height="0.8" fill="#8a8a8a"/><rect x="86.74" y="3" width="0.8" height="0.8" fill="#8a8a8a"/><rect x="90.52" y="3" width="0.8" height="0.8" fill="#8a8a8a"/><rect x="94.30" y="2" width="0.8" height="0.8" fill="#999"/><rect x="94.30" y="4.3" width="0.8" height="0.8" fill="#999"/><rect x="98.08" y="3" width="0.8" height="0.8" fill="#8a8a8a"/><rect x="101.86" y="3" width="0.8" height="0.8" fill="#8a8a8a"/><rect x="105.64" y="3" width="0.8" height="0.8" fill="#8a8a8a"/><rect x="109.42" y="3" width="0.8" height="0.8" fill="#8a8a8a"/><text x="113.60" y="5.3" font-family="Liberation Sans" font-size="4.2" text-anchor="middle" fill="#6a6a6a">1</text><rect x="113.15" y="0.1" width="0.9" height="0.9" fill="#777"/><rect x="113.15" y="7.1" width="0.9" height="0.9" fill="#777"/><rect x="116.98" y="3" width="0.8" height="0.8" fill="#8a8a8a"/><rect x="120.76" y="3" width="0.8" height="0.8" fill="#8a8a8a"/><rect x="124.54" y="3" width="0.8" height="0.8" fill="#8a8a8a"/><rect x="128.32" y="3" width="0.8" height="0.8" fill="#8a8a8a"/><rect x="132.10" y="2" width="0.8" height="0.8" fill="#999"/><rect x="132.10" y="4.3" width="0.8" height="0.8" fill="#999"/><rect x="135.88" y="3" width="0.8" height="0.8" fill="#8a8a8a"/><rect x="139.66" y="3" width="0.8" height="0.8" fill="#8a8a8a"/><rect x="143.44" y="3" width="0.8" height="0.8" fill="#8a8a8a"/><rect x="147.22" y="3" width="0.8" height="0.8" fill="#8a8a8a"/><text x="151.40" y="5.3" font-family="Liberation Sans" font-size="4.2" text-anchor="middle" fill="#6a6a6a">2</text><rect x="150.95" y="0.1" width="0.9" height="0.9" fill="#777"/><rect x="150.95" y="7.1" width="0.9" height="0.9" fill="#777"/><rect x="154.78" y="3" width="0.8" height="0.8" fill="#8a8a8a"/><rect x="158.56" y="3" width="0.8" height="0.8" fill="#8a8a8a"/><rect x="162.34" y="3" width="0.8" height="0.8" fill="#8a8a8a"/><rect x="166.12" y="3" width="0.8" height="0.8" fill="#8a8a8a"/><rect x="169.90" y="2" width="0.8" height="0.8" fill="#999"/><rect x="169.90" y="4.3" width="0.8" height="0.8" fill="#999"/><rect x="173.68" y="3" width="0.8" height="0.8" fill="#8a8a8a"/><rect x="177.46" y="3" width="0.8" height="0.8" fill="#8a8a8a"/><rect x="181.24" y="3" width="0.8" height="0.8" fill="#8a8a8a"/><rect x="185.02" y="3" width="0.8" height="0.8" fill="#8a8a8a"/><text x="189.20" y="5.3" font-family="Liberation Sans" font-size="4.2" text-anchor="middle" fill="#6a6a6a">3</text><rect x="188.75" y="0.1" width="0.9" height="0.9" fill="#777"/><rect x="188.75" y="7.1" width="0.9" height="0.9" fill="#777"/><rect x="192.58" y="3" width="0.8" height="0.8" fill="#8a8a8a"/><rect x="196.36" y="3" width="0.8" height="0.8" fill="#8a8a8a"/><rect x="200.14" y="3" width="0.8" height="0.8" fill="#8a8a8a"/><rect x="203.92" y="3" width="0.8" height="0.8" fill="#8a8a8a"/><rect x="207.70" y="2" width="0.8" height="0.8" fill="#999"/><rect x="207.70" y="4.3" width="0.8" height="0.8" fill="#999"/><rect x="211.48" y="3" width="0.8" height="0.8" fill="#8a8a8a"/><rect x="215.26" y="3" width="0.8" height="0.8" fill="#8a8a8a"/><rect x="219.04" y="3" width="0.8" height="0.8" fill="#8a8a8a"/><rect x="222.82" y="3" width="0.8" height="0.8" fill="#8a8a8a"/><text x="227.00" y="5.3" font-family="Liberation Sans" font-size="4.2" text-anchor="middle" fill="#6a6a6a">4</text><rect x="226.55" y="0.1" width="0.9" height="0.9" fill="#777"/><rect x="226.55" y="7.1" width="0.9" height="0.9" fill="#777"/><rect x="230.38" y="3" width="0.8" height="0.8" fill="#8a8a8a"/><rect x="234.16" y="3" width="0.8" height="0.8" fill="#8a8a8a"/><rect x="237.94" y="3" width="0.8" height="0.8" fill="#8a8a8a"/><rect x="241.72" y="3" width="0.8" height="0.8" fill="#8a8a8a"/><rect x="245.50" y="2" width="0.8" height="0.8" fill="#999"/><rect x="245.50" y="4.3" width="0.8" height="0.8" fill="#999"/><rect x="249.28" y="3" width="0.8" height="0.8" fill="#8a8a8a"/><rect x="253.06" y="3" width="0.8" height="0.8" fill="#8a8a8a"/><rect x="256.84" y="3" width="0.8" height="0.8" fill="#8a8a8a"/><rect x="260.62" y="3" width="0.8" height="0.8" fill="#8a8a8a"/><text x="264.80" y="5.3" font-family="Liberation Sans" font-size="4.2" text-anchor="middle" fill="#6a6a6a">5</text><rect x="264.35" y="0.1" width="0.9" height="0.9" fill="#777"/><rect x="264.35" y="7.1" width="0.9" height="0.9" fill="#777"/><rect x="268.18" y="3" width="0.8" height="0.8" fill="#8a8a8a"/><rect x="271.96" y="3" width="0.8" height="0.8" fill="#8a8a8a"/><rect x="275.74" y="3" width="0.8" height="0.8" fill="#8a8a8a"/><rect x="279.52" y="3" width="0.8" height="0.8" fill="#8a8a8a"/><rect x="283.30" y="2" width="0.8" height="0.8" fill="#999"/><rect x="283.30" y="4.3" width="0.8" height="0.8" fill="#999"/><rect x="287.08" y="3" width="0.8" height="0.8" fill="#8a8a8a"/><rect x="290.86" y="3" width="0.8" height="0.8" fill="#8a8a8a"/><rect x="294.64" y="3" width="0.8" height="0.8" fill="#8a8a8a"/><rect x="298.42" y="3" width="0.8" height="0.8" fill="#8a8a8a"/><text x="302.60" y="5.3" font-family="Liberation Sans" font-size="4.2" text-anchor="middle" fill="#6a6a6a">6</text><rect x="302.15" y="0.1" width="0.9" height="0.9" fill="#777"/><rect x="302.15" y="7.1" width="0.9" height="0.9" fill="#777"/><rect x="305.98" y="3" width="0.8" height="0.8" fill="#8a8a8a"/><rect x="309.76" y="3" width="0.8" height="0.8" fill="#8a8a8a"/><rect x="313.54" y="3" width="0.8" height="0.8" fill="#8a8a8a"/><rect x="317.32" y="3" width="0.8" height="0.8" fill="#8a8a8a"/><rect x="321.10" y="2" width="0.8" height="0.8" fill="#999"/><rect x="321.10" y="4.3" width="0.8" height="0.8" fill="#999"/><rect x="324.88" y="3" width="0.8" height="0.8" fill="#8a8a8a"/><rect x="328.66" y="3" width="0.8" height="0.8" fill="#8a8a8a"/><rect x="332.44" y="3" width="0.8" height="0.8" fill="#8a8a8a"/><rect x="336.22" y="3" width="0.8" height="0.8" fill="#8a8a8a"/><text x="340.40" y="5.3" font-family="Liberation Sans" font-size="4.2" text-anchor="middle" fill="#6a6a6a">7</text><rect x="339.95" y="0.1" width="0.9" height="0.9" fill="#777"/><rect x="339.95" y="7.1" width="0.9" height="0.9" fill="#777"/><rect x="343.78" y="3" width="0.8" height="0.8" fill="#8a8a8a"/><rect x="347.56" y="3" width="0.8" height="0.8" fill="#8a8a8a"/><rect x="351.34" y="3" width="0.8" height="0.8" fill="#8a8a8a"/><rect x="355.12" y="3" width="0.8" height="0.8" fill="#8a8a8a"/><rect x="358.90" y="2" width="0.8" height="0.8" fill="#999"/><rect x="358.90" y="4.3" width="0.8" height="0.8" fill="#999"/><rect x="362.68" y="3" width="0.8" height="0.8" fill="#8a8a8a"/><rect x="366.46" y="3" width="0.8" height="0.8" fill="#8a8a8a"/><rect x="370.24" y="3" width="0.8" height="0.8" fill="#8a8a8a"/><rect x="374.02" y="3" width="0.8" height="0.8" fill="#8a8a8a"/><text x="378.20" y="5.3" font-family="Liberation Sans" font-size="4.2" text-anchor="middle" fill="#6a6a6a">8</text><rect x="377.75" y="0.1" width="0.9" height="0.9" fill="#777"/><rect x="377.75" y="7.1" width="0.9" height="0.9" fill="#777"/><rect x="381.58" y="3" width="0.8" height="0.8" fill="#8a8a8a"/><rect x="385.36" y="3" width="0.8" height="0.8" fill="#8a8a8a"/><rect x="389.14" y="3" width="0.8" height="0.8" fill="#8a8a8a"/><rect x="392.92" y="3" width="0.8" height="0.8" fill="#8a8a8a"/><rect x="396.70" y="2" width="0.8" height="0.8" fill="#999"/><rect x="396.70" y="4.3" width="0.8" height="0.8" fill="#999"/><rect x="400.48" y="3" width="0.8" height="0.8" fill="#8a8a8a"/><rect x="404.26" y="3" width="0.8" height="0.8" fill="#8a8a8a"/><rect x="408.04" y="3" width="0.8" height="0.8" fill="#8a8a8a"/><rect x="411.82" y="3" width="0.8" height="0.8" fill="#8a8a8a"/><text x="416.00" y="5.3" font-family="Liberation Sans" font-size="4.2" text-anchor="middle" fill="#6a6a6a">9</text><rect x="415.55" y="0.1" width="0.9" height="0.9" fill="#777"/><rect x="415.55" y="7.1" width="0.9" height="0.9" fill="#777"/><rect x="419.38" y="3" width="0.8" height="0.8" fill="#8a8a8a"/><rect x="423.16" y="3" width="0.8" height="0.8" fill="#8a8a8a"/><rect x="426.94" y="3" width="0.8" height="0.8" fill="#8a8a8a"/><rect x="430.72" y="3" width="0.8" height="0.8" fill="#8a8a8a"/><rect x="434.50" y="2" width="0.8" height="0.8" fill="#999"/><rect x="434.50" y="4.3" width="0.8" height="0.8" fill="#999"/><rect x="438.28" y="3" width="0.8" height="0.8" fill="#8a8a8a"/><rect x="442.06" y="3" width="0.8" height="0.8" fill="#8a8a8a"/><rect x="445.84" y="3" width="0.8" height="0.8" fill="#8a8a8a"/><rect x="449.62" y="3" width="0.8" height="0.8" fill="#8a8a8a"/><text x="453.80" y="5.3" font-family="Liberation Sans" font-size="4.2" text-anchor="middle" fill="#6a6a6a">10</text><rect x="453.35" y="0.1" width="0.9" height="0.9" fill="#777"/><rect x="453.35" y="7.1" width="0.9" height="0.9" fill="#777"/><rect x="457.18" y="3" width="0.8" height="0.8" fill="#8a8a8a"/><rect x="460.96" y="3" width="0.8" height="0.8" fill="#8a8a8a"/><rect x="464.74" y="3" width="0.8" height="0.8" fill="#8a8a8a"/><rect x="468.52" y="3" width="0.8" height="0.8" fill="#8a8a8a"/><rect x="472.30" y="2" width="0.8" height="0.8" fill="#999"/><rect x="472.30" y="4.3" width="0.8" height="0.8" fill="#999"/><rect x="476.08" y="3" width="0.8" height="0.8" fill="#8a8a8a"/><rect x="479.86" y="3" width="0.8" height="0.8" fill="#8a8a8a"/><rect x="483.64" y="3" width="0.8" height="0.8" fill="#8a8a8a"/><rect x="487.42" y="3" width="0.8" height="0.8" fill="#8a8a8a"/><text x="491.60" y="5.3" font-family="Liberation Sans" font-size="4.2" text-anchor="middle" fill="#6a6a6a">11</text><rect x="491.15" y="0.1" width="0.9" height="0.9" fill="#777"/><rect x="491.15" y="7.1" width="0.9" height="0.9" fill="#777"/><rect x="494.98" y="3" width="0.8" height="0.8" fill="#8a8a8a"/><rect x="498.76" y="3" width="0.8" height="0.8" fill="#8a8a8a"/><rect x="502.54" y="3" width="0.8" height="0.8" fill="#8a8a8a"/><rect x="506.32" y="3" width="0.8" height="0.8" fill="#8a8a8a"/><rect x="510.10" y="2" width="0.8" height="0.8" fill="#999"/><rect x="510.10" y="4.3" width="0.8" height="0.8" fill="#999"/><rect x="513.88" y="3" width="0.8" height="0.8" fill="#8a8a8a"/><rect x="517.66" y="3" width="0.8" height="0.8" fill="#8a8a8a"/><rect x="521.44" y="3" width="0.8" height="0.8" fill="#8a8a8a"/><rect x="525.22" y="3" width="0.8" height="0.8" fill="#8a8a8a"/><text x="529.40" y="5.3" font-family="Liberation Sans" font-size="4.2" text-anchor="middle" fill="#6a6a6a">12</text><rect x="528.95" y="0.1" width="0.9" height="0.9" fill="#777"/><rect x="528.95" y="7.1" width="0.9" height="0.9" fill="#777"/><rect x="532.78" y="3" width="0.8" height="0.8" fill="#8a8a8a"/><rect x="536.56" y="3" width="0.8" height="0.8" fill="#8a8a8a"/><rect x="540.34" y="3" width="0.8" height="0.8" fill="#8a8a8a"/><rect x="544.12" y="3" width="0.8" height="0.8" fill="#8a8a8a"/><rect x="547.90" y="2" width="0.8" height="0.8" fill="#999"/><rect x="547.90" y="4.3" width="0.8" height="0.8" fill="#999"/><rect x="551.68" y="3" width="0.8" height="0.8" fill="#8a8a8a"/><rect x="555.46" y="3" width="0.8" height="0.8" fill="#8a8a8a"/><rect x="559.24" y="3" width="0.8" height="0.8" fill="#8a8a8a"/><rect x="563.02" y="3" width="0.8" height="0.8" fill="#8a8a8a"/><text x="567.20" y="5.3" font-family="Liberation Sans" font-size="4.2" text-anchor="middle" fill="#6a6a6a">13</text><rect x="566.75" y="0.1" width="0.9" height="0.9" fill="#777"/><rect x="566.75" y="7.1" width="0.9" height="0.9" fill="#777"/><rect x="570.58" y="3" width="0.8" height="0.8" fill="#8a8a8a"/><rect x="574.36" y="3" width="0.8" height="0.8" fill="#8a8a8a"/><rect x="578.14" y="3" width="0.8" height="0.8" fill="#8a8a8a"/><rect x="581.92" y="3" width="0.8" height="0.8" fill="#8a8a8a"/><rect x="585.70" y="2" width="0.8" height="0.8" fill="#999"/><rect x="585.70" y="4.3" width="0.8" height="0.8" fill="#999"/><rect x="589.48" y="3" width="0.8" height="0.8" fill="#8a8a8a"/><rect x="593.26" y="3" width="0.8" height="0.8" fill="#8a8a8a"/><rect x="597.04" y="3" width="0.8" height="0.8" fill="#8a8a8a"/><rect x="600.82" y="3" width="0.8" height="0.8" fill="#8a8a8a"/><text x="605.00" y="5.3" font-family="Liberation Sans" font-size="4.2" text-anchor="middle" fill="#6a6a6a">14</text><rect x="604.55" y="0.1" width="0.9" height="0.9" fill="#777"/><rect x="604.55" y="7.1" width="0.9" height="0.9" fill="#777"/><rect x="608.38" y="3" width="0.8" height="0.8" fill="#8a8a8a"/><rect x="612.16" y="3" width="0.8" height="0.8" fill="#8a8a8a"/><rect x="615.94" y="3" width="0.8" height="0.8" fill="#8a8a8a"/><rect x="619.72" y="3" width="0.8" height="0.8" fill="#8a8a8a"/><rect x="623.50" y="2" width="0.8" height="0.8" fill="#999"/><rect x="623.50" y="4.3" width="0.8" height="0.8" fill="#999"/><rect x="627.28" y="3" width="0.8" height="0.8" fill="#8a8a8a"/><rect x="631.06" y="3" width="0.8" height="0.8" fill="#8a8a8a"/><rect x="634.84" y="3" width="0.8" height="0.8" fill="#8a8a8a"/><rect x="638.62" y="3" width="0.8" height="0.8" fill="#8a8a8a"/><text x="642.80" y="5.3" font-family="Liberation Sans" font-size="4.2" text-anchor="middle" fill="#6a6a6a">15</text><rect x="642.35" y="0.1" width="0.9" height="0.9" fill="#777"/><rect x="642.35" y="7.1" width="0.9" height="0.9" fill="#777"/><rect x="646.18" y="3" width="0.8" height="0.8" fill="#8a8a8a"/><rect x="649.96" y="3" width="0.8" height="0.8" fill="#8a8a8a"/><rect x="653.74" y="3" width="0.8" height="0.8" fill="#8a8a8a"/><rect x="657.52" y="3" width="0.8" height="0.8" fill="#8a8a8a"/><rect x="661.30" y="2" width="0.8" height="0.8" fill="#999"/><rect x="661.30" y="4.3" width="0.8" height="0.8" fill="#999"/><rect x="665.08" y="3" width="0.8" height="0.8" fill="#8a8a8a"/><rect x="668.86" y="3" width="0.8" height="0.8" fill="#8a8a8a"/><rect x="672.64" y="3" width="0.8" height="0.8" fill="#8a8a8a"/><rect x="676.42" y="3" width="0.8" height="0.8" fill="#8a8a8a"/><text x="680.60" y="5.3" font-family="Liberation Sans" font-size="4.2" text-anchor="middle" fill="#6a6a6a">16</text><rect x="680.15" y="0.1" width="0.9" height="0.9" fill="#777"/><rect x="680.15" y="7.1" width="0.9" height="0.9" fill="#777"/><rect x="683.98" y="3" width="0.8" height="0.8" fill="#8a8a8a"/><rect x="687.76" y="3" width="0.8" height="0.8" fill="#8a8a8a"/><rect x="691.54" y="3" width="0.8" height="0.8" fill="#8a8a8a"/><rect x="695.32" y="3" width="0.8" height="0.8" fill="#8a8a8a"/><rect x="699.10" y="2" width="0.8" height="0.8" fill="#999"/><rect x="699.10" y="4.3" width="0.8" height="0.8" fill="#999"/><rect x="702.88" y="3" width="0.8" height="0.8" fill="#8a8a8a"/><rect x="706.66" y="3" width="0.8" height="0.8" fill="#8a8a8a"/><rect x="710.44" y="3" width="0.8" height="0.8" fill="#8a8a8a"/><rect x="714.22" y="3" width="0.8" height="0.8" fill="#8a8a8a"/><rect x="721.78" y="3" width="0.8" height="0.8" fill="#8a8a8a"/><rect x="725.56" y="3" width="0.8" height="0.8" fill="#8a8a8a"/><rect x="729.34" y="3" width="0.8" height="0.8" fill="#8a8a8a"/><rect x="733.12" y="3" width="0.8" height="0.8" fill="#8a8a8a"/><rect x="736.90" y="2" width="0.8" height="0.8" fill="#999"/><rect x="736.90" y="4.3" width="0.8" height="0.8" fill="#999"/><rect x="740.68" y="3" width="0.8" height="0.8" fill="#8a8a8a"/><rect x="744.46" y="3" width="0.8" height="0.8" fill="#8a8a8a"/><rect x="748.24" y="3" width="0.8" height="0.8" fill="#8a8a8a"/><rect x="752.02" y="3" width="0.8" height="0.8" fill="#8a8a8a"/><text x="756.20" y="5.3" font-family="Liberation Sans" font-size="4.2" text-anchor="middle" fill="#6a6a6a">18</text><rect x="755.75" y="0.1" width="0.9" height="0.9" fill="#777"/><rect x="755.75" y="7.1" width="0.9" height="0.9" fill="#777"/><rect x="759.58" y="3" width="0.8" height="0.8" fill="#8a8a8a"/><rect x="763.36" y="3" width="0.8" height="0.8" fill="#8a8a8a"/><rect x="767.14" y="3" width="0.8" height="0.8" fill="#8a8a8a"/><rect x="770.92" y="3" width="0.8" height="0.8" fill="#8a8a8a"/><rect x="774.70" y="2" width="0.8" height="0.8" fill="#999"/><rect x="774.70" y="4.3" width="0.8" height="0.8" fill="#999"/><rect x="778.48" y="3" width="0.8" height="0.8" fill="#8a8a8a"/><rect x="782.26" y="3" width="0.8" height="0.8" fill="#8a8a8a"/><rect x="786.04" y="3" width="0.8" height="0.8" fill="#8a8a8a"/><rect x="789.82" y="3" width="0.8" height="0.8" fill="#8a8a8a"/></svg>
<svg class="a" style="left:67px;top:71px;" width="794" height="5" viewBox="0 0 794 5"><path d="M121.45 3.5H124.65M123.05 0.5V3.5" stroke="#555" stroke-width="0.8"/><path d="M168.70 3.5H171.90M170.30 0.5V3.5" stroke="#555" stroke-width="0.8"/><path d="M215.95 3.5H219.15M217.55 0.5V3.5" stroke="#555" stroke-width="0.8"/><path d="M263.20 3.5H266.40M264.80 0.5V3.5" stroke="#555" stroke-width="0.8"/><path d="M310.45 3.5H313.65M312.05 0.5V3.5" stroke="#555" stroke-width="0.8"/><path d="M357.70 3.5H360.90M359.30 0.5V3.5" stroke="#555" stroke-width="0.8"/><path d="M404.95 3.5H408.15M406.55 0.5V3.5" stroke="#555" stroke-width="0.8"/><path d="M452.20 3.5H455.40M453.80 0.5V3.5" stroke="#555" stroke-width="0.8"/><path d="M499.45 3.5H502.65M501.05 0.5V3.5" stroke="#555" stroke-width="0.8"/><path d="M546.70 3.5H549.90M548.30 0.5V3.5" stroke="#555" stroke-width="0.8"/><path d="M593.95 3.5H597.15M595.55 0.5V3.5" stroke="#555" stroke-width="0.8"/><path d="M641.20 3.5H644.40M642.80 0.5V3.5" stroke="#555" stroke-width="0.8"/><path d="M688.45 3.5H691.65M690.05 0.5V3.5" stroke="#555" stroke-width="0.8"/></svg>
<svg class="a" style="left:67px;top:66px;" width="794" height="8" viewBox="0 0 794 8"><path d="M73.40 0.8L78.20 7.2M78.20 0.8L73.40 7.2" stroke="#555" stroke-width="0.8"/><path d="M715.70 7.4L718.10 3.8L720.50 7.4" stroke="#555" stroke-width="0.8" fill="none"/><rect x="717.60" y="0.3" width="1" height="2.5" fill="#888"/></svg>
<svg class="a" style="left:3px;top:67px;" width="6" height="6" viewBox="0 0 6 6"><path d="M1.6 1.2V4.3" stroke="#222" stroke-width="1.1"/><path d="M2.1 3.9H4.8" stroke="#555" stroke-width="1"/></svg>
<div class="a" style="left:142px;top:158px;width:1px;height:13px;background:#d0d0d0"></div>
<div class="a" style="left:129px;top:171px;width:13px;height:1px;background:#d0d0d0"></div>
<div class="a" style="left:142px;top:171px;width:1px;height:18px;background:#555"></div>
<div class="a" style="left:785px;top:158px;width:1px;height:13px;background:#d0d0d0"></div>
<div class="a" style="left:786px;top:171px;width:12px;height:1px;background:#d0d0d0"></div>
<div class="a" style="left:949.3px;top:72px;width:1.2px;height:1.2px;background:#999"></div>
<div class="a" style="left:949.3px;top:74.5px;width:1.2px;height:1.2px;background:#999"></div>
<div class="a" style="left:949.3px;top:77px;width:1.2px;height:1.2px;background:#999"></div>
<div class="a" style="left:942px;top:85px;width:16px;height:17px;background:#f8f8f8;border:1px solid #cbcbcb;border-radius:1.5px"></div>
<div class="a" style="left:944.5px;top:83px;width:12px;height:1px;background:#e2e2e2"></div>
<svg class="a" style="left:944.5px;top:88px;" width="11" height="12" viewBox="0 0 11 12"><rect x="1.5" y="1.5" width="8" height="9" fill="#fff" stroke="#8a8a8a" stroke-width="0.8"/><rect x="1.1" y="1.1" width="8.8" height="1.5" fill="#6a6a6a"/><path d="M3 5.5h5M3 7.5h5" stroke="#666" stroke-width="0.6"/><path d="M5.5 4.5v2M4.5 6.5v2" stroke="#3a7acc" stroke-width="0.6"/></svg>
<svg class="a" style="left:945px;top:105px;" width="10" height="12" viewBox="0 0 10 12"><path d="M1.5 1.5H6L8.5 4V10.5H1.5Z" fill="#fff" stroke="#808080" stroke-width="0.8"/><path d="M6 1.5V4H8.5" fill="none" stroke="#808080" stroke-width="0.6"/></svg>
<svg class="a" style="left:944px;top:122px;" width="12" height="12" viewBox="0 0 12 12"><path d="M1 10.5L4.2 1.8H5L6.8 6.5" stroke="#505050" stroke-width="0.9" fill="none"/><path d="M4.5 10.5L7.5 1.8H8.3L11.2 10.5M5.6 7.6H10.2" stroke="#2a6cbf" stroke-width="1" fill="none"/><path d="M3.5 11.3H11.5" stroke="#8ab4e0" stroke-width="0.7"/></svg>
<svg class="a" style="left:944px;top:141px;" width="12" height="11" viewBox="0 0 12 11"><path d="M0.5 2H4L5 3H9.5V8H0.5Z" fill="#eec17e"/><rect x="4" y="4.5" width="7" height="6" fill="#fff" stroke="#8a8a8a" stroke-width="0.7"/><path d="M4.4 10.1L6.5 7.6L8 8.6L10.6 6.3V10.1Z" fill="#3a7acc"/><circle cx="6" cy="6.2" r="0.6" fill="#eea845"/></svg>
<svg class="a" style="left:945px;top:158px;" width="11" height="12" viewBox="0 0 11 12"><circle cx="5" cy="5.8" r="4.3" fill="#fff" stroke="#8a8a8a" stroke-width="0.8"/><path d="M2.8 8L4.2 4.5L7.3 3.5L5.9 7Z" fill="#3a7acc"/><circle cx="5" cy="5.8" r="0.6" fill="#fff"/></svg>
<div class="a" style="left:1px;top:493px;width:2px;height:1px;background:#b8b8b8"></div>
<div class="a" style="left:1px;top:495px;width:2px;height:1px;background:#b8b8b8"></div>
<div class="a" style="left:1px;top:497px;width:2px;height:1px;background:#b8b8b8"></div>
<div class="a" style="left:1px;top:499px;width:2px;height:1px;background:#b8b8b8"></div>
<div class="a" style="left:1px;top:501px;width:2px;height:1px;background:#b8b8b8"></div>
<div class="a" style="left:1px;top:503px;width:2px;height:1px;background:#b8b8b8"></div>
<svg class="a" style="left:9px;top:494px;" width="10" height="10" viewBox="0 0 10 10"><circle cx="5" cy="5" r="4.5" fill="#e46d87"/><path d="M3 3l4 4M7 3l-4 4" stroke="#fff" stroke-width="1.2"/></svg>
<div class="a" style="left:22px;top:493px;width:125px;height:12px;background:#fff;border:1px solid #c4c4c8"></div>
<div class="a" style="left:138px;top:494px;width:8px;height:10px;background:#e6e6e6;border:1px solid #c9c9c9"></div>
<svg class="a" style="left:138px;top:494px;" width="9" height="10" viewBox="0 0 9 10"><path d="M2.5 4L4.5 6L6.5 4" stroke="#444" stroke-width="0.8" fill="none"/></svg>
<div class="t" style="left:24px;top:496.2px;font-size:7px;color:#8a8a8a;transform:scaleX(0.787);">Znajdź</div>
<svg class="a" style="left:150px;top:494px;" width="12" height="10" viewBox="0 0 12 10"><path d="M1 8L5.8 3L10.6 8" stroke="#c6c6c6" stroke-width="0.8" fill="none"/></svg>
<svg class="a" style="left:166px;top:494px;" width="12" height="10" viewBox="0 0 12 10"><path d="M1 3L5.8 8L10.6 3" stroke="#c6c6c6" stroke-width="0.8" fill="none"/></svg>
<div class="t" style="left:182px;top:496.2px;font-size:7px;color:#8d8d8d;transform:scaleX(0.763);">Znajdź wszystkie</div>
<div class="a" style="left:229.5px;top:495.8px;width:6.5px;height:6.5px;background:#fff;border:1px solid #444"></div>
<div class="t" style="left:238px;top:496.2px;font-size:7px;color:#111;transform:scaleX(0.781);">Uwzględnij wielkość liter</div>
<div class="a" style="left:238px;top:502.6px;width:4.5px;height:0.8px;background:#333"></div>
<div class="a" style="left:305px;top:493px;width:1px;height:12px;background:#d2d2d2"></div>
<svg class="a" style="left:310px;top:493px;" width="13" height="12" viewBox="0 0 13 12"><circle cx="6.8" cy="4.5" r="3.1" fill="#fff" stroke="#555" stroke-width="0.9"/><path d="M4.6 6.8L1.2 10.8" stroke="#555" stroke-width="1.1"/><path d="M6.3 3.2v2.5M7.2 3.2h1" stroke="#555" stroke-width="0.7"/><path d="M9 7.5H11.5V11.2H9Z" fill="#fff" stroke="#3a7acc" stroke-width="0.9"/></svg>
<div class="a" style="left:326px;top:493px;width:1px;height:12px;background:#d2d2d2"></div>
<div class="a" style="left:328.5px;top:493.5px;width:75px;height:11px;background:#fff;border:1px solid #c4c4c8"></div>
<div class="a" style="left:394.5px;top:494.5px;width:8px;height:9px;background:#e6e6e6;border:1px solid #c9c9c9"></div>
<svg class="a" style="left:394.5px;top:494.5px;" width="9" height="9" viewBox="0 0 9 9"><path d="M2.5 3.5L4.5 5.5L6.5 3.5" stroke="#444" stroke-width="0.8" fill="none"/></svg>
<svg class="a" style="left:330.5px;top:494.5px;" width="8" height="10" viewBox="0 0 8 10"><path d="M1.5 1H5L7 3V9H1.5Z" fill="#fff" stroke="#777" stroke-width="0.8"/></svg>
<div class="t" style="left:341px;top:496.2px;font-size:7px;color:#111;transform:scaleX(0.772);">Strona</div>
<svg class="a" style="left:406px;top:494px;" width="12" height="10" viewBox="0 0 12 10"><path d="M1 8L5.8 3L10.6 8" stroke="#8a8a8a" stroke-width="0.8" fill="none"/></svg>
<svg class="a" style="left:422px;top:494px;" width="12" height="10" viewBox="0 0 12 10"><path d="M1 3L5.8 8L10.6 3" stroke="#8a8a8a" stroke-width="0.8" fill="none"/></svg>
<div class="a" style="left:438px;top:493px;width:1px;height:12px;background:#d2d2d2"></div>
<div class="t" style="left:5.5px;top:511.8px;font-size:7px;color:#111;transform:scaleX(0.731);">Strona 1 z 1</div>
<div class="a" style="left:151px;top:511px;width:1px;height:8px;background:#c6c6c6"></div>
<div class="a" style="left:319px;top:511px;width:1px;height:8px;background:#c6c6c6"></div>
<div class="a" style="left:479px;top:511px;width:1px;height:8px;background:#c6c6c6"></div>
<div class="a" style="left:618px;top:511px;width:1px;height:8px;background:#c6c6c6"></div>
<div class="a" style="left:652px;top:511px;width:1px;height:8px;background:#c6c6c6"></div>
<div class="a" style="left:667px;top:511px;width:1px;height:8px;background:#c6c6c6"></div>
<div class="a" style="left:682px;top:511px;width:1px;height:8px;background:#c6c6c6"></div>
<div class="a" style="left:697px;top:511px;width:1px;height:8px;background:#c6c6c6"></div>
<div class="a" style="left:826px;top:511px;width:1px;height:8px;background:#c6c6c6"></div>
<div class="a" style="left:864px;top:511px;width:1px;height:8px;background:#c6c6c6"></div>
<div class="a" style="left:936px;top:511px;width:1px;height:8px;background:#c6c6c6"></div>
<div class="t" style="left:156.2px;top:511.8px;font-size:7px;color:#111;transform:scaleX(0.775);">0 słów, 0 znaków</div>
<div class="t" style="left:324.6px;top:511.8px;font-size:7px;color:#111;transform:scaleX(0.774);">Styl domyślny</div>
<div class="t" style="left:541.7px;top:511.8px;font-size:7px;color:#111;transform:scaleX(0.773);">Polski</div>
<svg class="a" style="left:656px;top:511px;" width="10" height="9" viewBox="0 0 10 9"><rect x="1.2" y="2.3" width="4.8" height="3.6" rx="1" fill="none" stroke="#5a5a5a" stroke-width="0.8"/><path d="M7.5 1.3h1.3M7.5 7.3h1.3M8.15 1.3v6" stroke="#5a5a5a" stroke-width="0.8" fill="none"/></svg>
<svg class="a" style="left:672px;top:511px;" width="8" height="9" viewBox="0 0 8 9"><path d="M1.2 1.8H5.5L6.8 3V6.6H1.2Z" fill="none" stroke="#5a5a5a" stroke-width="0.8"/><rect x="5" y="1.2" width="1.6" height="1.6" fill="#333"/><rect x="2.5" y="4.6" width="3" height="2" fill="none" stroke="#5a5a5a" stroke-width="0.6"/></svg>
<svg class="a" style="left:831px;top:511px;" width="7" height="9" viewBox="0 0 7 9"><path d="M1.3 1.5H3.8L5.3 3V7.6H1.3Z" fill="#fff" stroke="#3a7acc" stroke-width="0.8"/></svg>
<svg class="a" style="left:839px;top:511px;" width="10" height="9" viewBox="0 0 10 9"><path d="M0.9 1.8H3.6L4.6 2.8V7.4H0.9Z" fill="none" stroke="#8a8a8a" stroke-width="0.7"/><path d="M4.6 2.8V1.8H7.6L8.8 3V7.4H4.6" fill="none" stroke="#8a8a8a" stroke-width="0.7"/></svg>
<svg class="a" style="left:851px;top:511px;" width="10" height="9" viewBox="0 0 10 9"><path d="M4.8 2.6C3.8 1.6 2.2 1.6 1 2.4V7.4C2.2 6.8 3.8 6.8 4.8 7.4C5.8 6.8 7.4 6.8 8.6 7.4V2.4C7.4 1.6 5.8 1.6 4.8 2.6V7.4" fill="none" stroke="#8a8a8a" stroke-width="0.7"/></svg>
<div class="a" style="left:869.5px;top:514.5px;width:4.8px;height:1.4px;background:#7a7a7a"></div>
<div class="a" style="left:877px;top:514.8px;width:49px;height:0.9px;background:#6a6a6a"></div>
<div class="a" style="left:892.2px;top:513.3px;width:1px;height:3.8px;background:#555"></div>
<div class="a" style="left:901.2px;top:513.3px;width:1px;height:3.8px;background:#555"></div>
<div class="a" style="left:904.8px;top:511.8px;width:2.2px;height:6.4px;background:#3a3a3a"></div>
<div class="a" style="left:928.8px;top:514.5px;width:5px;height:1.4px;background:#7a7a7a"></div>
<div class="a" style="left:930.6px;top:512.6px;width:1.4px;height:5.2px;background:#7a7a7a"></div>
<div class="t" style="left:941px;top:511.8px;font-size:7px;color:#111;transform:scaleX(0.766);">200%</div>
</body></html>
